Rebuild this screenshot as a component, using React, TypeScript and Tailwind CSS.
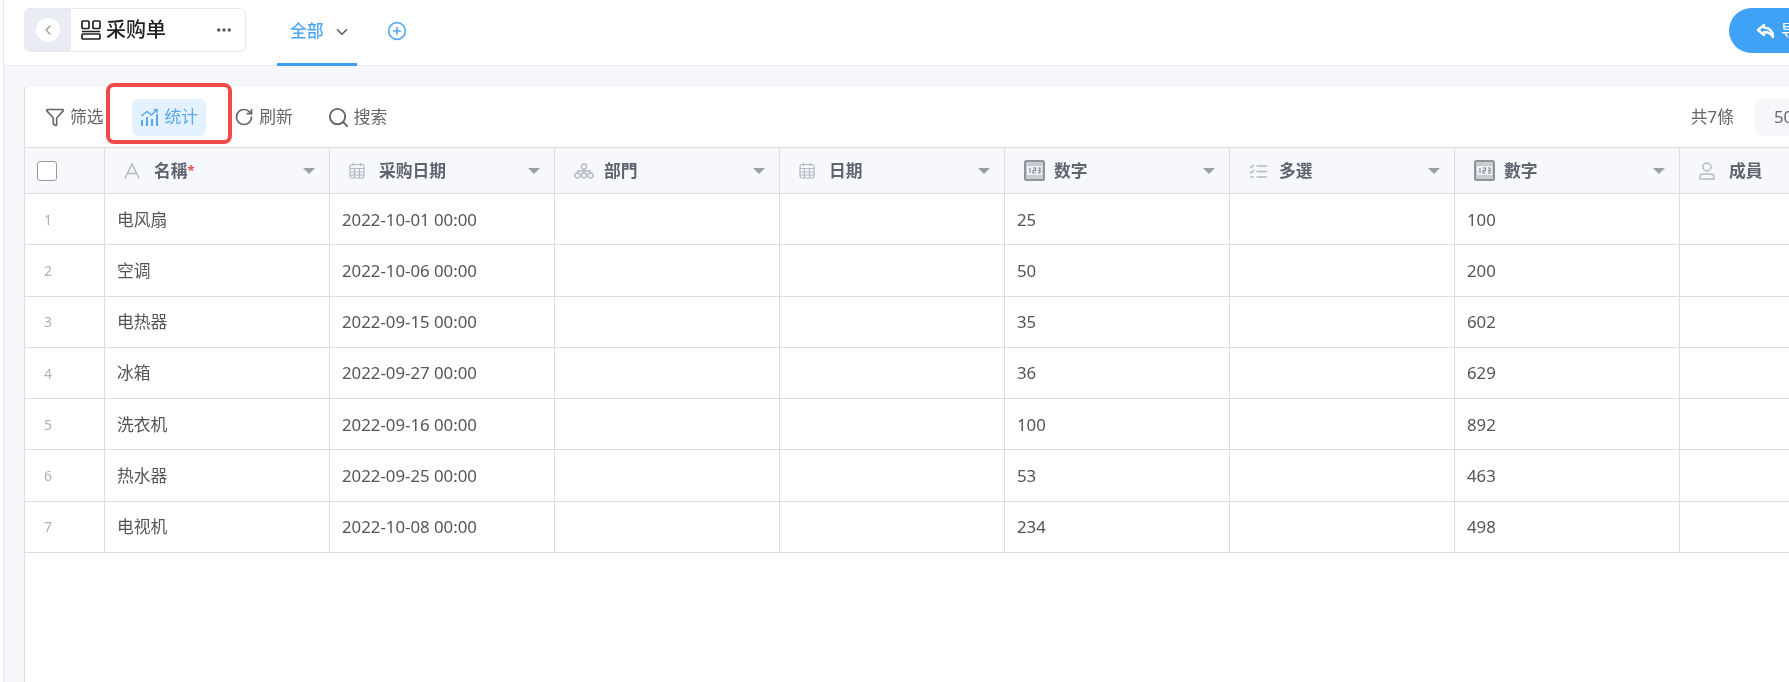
import React from 'react';
import { ChevronDown, ChevronLeft, CirclePlus, Ellipsis, Funnel, RotateCw, Search } from 'lucide-react';

const TitleIcon = () => (
  <svg width="20" height="20" viewBox="0 0 20 20" fill="none" stroke="#222" strokeWidth="1.700" className="shrink-0">
    <rect x="1" y="1" width="7" height="7.500" rx="1" />
    <rect x="12" y="1" width="7" height="7.500" rx="1" />
    <path d="M1 11.500h18" />
    <rect x="1" y="14" width="18" height="5" rx="1" />
  </svg>
);

const ReplyIcon = () => (
  <svg width="19" height="16" viewBox="0 0 19 16" fill="none" stroke="#fff" strokeWidth="2.400" strokeLinejoin="round" className="shrink-0">
    <path d="M8 2 2 7l6 5V9c4 0 7 1 9 5 0-6-3-9-9-9.500z" />
  </svg>
);

const StatsIcon = () => (
  <svg width="19" height="19" viewBox="0 0 19 19" fill="none" stroke="#5aa9f0" strokeWidth="2">
    <path d="M2 18v-6M7 18V9M12 18v-7M17 18V6" />
    <path d="M1.500 8 7 3.500l4.500 3.500 5-5" strokeWidth="1.500" />
    <path d="M13.500 1.500h3.500v3.500" strokeWidth="1.500" />
  </svg>
);

const TextTypeIcon = () => (
  <svg width="16" height="16" viewBox="0 0 16 16" fill="none" stroke="#b4b8c0" strokeWidth="1.500">
    <path d="M1 15.500 8 1l7 14.500M3.500 10.500h9" />
  </svg>
);

const DateTypeIcon = () => (
  <svg width="16" height="17" viewBox="0 0 16 17" fill="none" stroke="#b4b8c0" strokeWidth="1.200">
    <rect x="1" y="2.500" width="14" height="13.500" rx="2" />
    <path d="M1 6.500h14M1 10h14M1 13h14M5.500 6.500V16M10.500 6.500V16M4.500 1v3M11.500 1v3" />
  </svg>
);

const DeptTypeIcon = () => (
  <svg width="20" height="16" viewBox="0 0 20 16" fill="none" stroke="#b4b8c0" strokeWidth="1.300">
    <circle cx="10" cy="3.500" r="2.500" />
    <circle cx="3.500" cy="12.500" r="2.500" />
    <circle cx="10" cy="12.500" r="2.500" />
    <circle cx="16.500" cy="12.500" r="2.500" />
    <path d="M10 6v4M3.500 10V8h13v2" />
  </svg>
);

const NumberTypeIcon = () => (
  <svg width="21" height="21" viewBox="0 0 21 21" fill="none">
    <rect x="1" y="1" width="19" height="19" rx="1.500" fill="#c8cbd2" stroke="#8f919b" strokeWidth="2" />
    <rect x="3" y="6" width="15" height="9" fill="#eef0f4" />
    <path d="M6 8v5M9 8h2.500v2.500H9V13h2.500M14 8h2v5h-2M14 10.500h2" stroke="#7f828c" strokeWidth="1.100" />
  </svg>
);

const MultiTypeIcon = () => (
  <svg width="18" height="16" viewBox="0 0 18 16" fill="none" stroke="#b4b8c0" strokeWidth="1.400">
    <path d="M1 3 2.500 4.500 5 1.500M1 8.500 2.500 10 5 7M1 14h3.500M7.500 3H18M7.500 8.500H18M7.500 14H18" />
  </svg>
);

const MemberTypeIcon = () => (
  <svg width="16" height="18" viewBox="0 0 16 18" fill="none" stroke="#b4b8c0" strokeWidth="1.400">
    <circle cx="8" cy="5" r="4" />
    <path d="M1 17v-2a3 3 0 0 1 3-3h8a3 3 0 0 1 3 3v2z" />
  </svg>
);

const columns = [
  { label: '名稱', icon: <TextTypeIcon />, required: true },
  { label: '采购日期', icon: <DateTypeIcon /> },
  { label: '部門', icon: <DeptTypeIcon /> },
  { label: '日期', icon: <DateTypeIcon /> },
  { label: '数字', icon: <NumberTypeIcon /> },
  { label: '多選', icon: <MultiTypeIcon /> },
  { label: '數字', icon: <NumberTypeIcon /> },
  { label: '成員', icon: <MemberTypeIcon /> },
];

const rows = [
  ['电风扇', '2022-10-01 00:00', '25', '100'],
  ['空调', '2022-10-06 00:00', '50', '200'],
  ['电热器', '2022-09-15 00:00', '35', '602'],
  ['冰箱', '2022-09-27 00:00', '36', '629'],
  ['洗衣机', '2022-09-16 00:00', '100', '892'],
  ['热水器', '2022-09-25 00:00', '53', '463'],
  ['电视机', '2022-10-08 00:00', '234', '498'],
];

const Cell = ({ children }: { children?: React.ReactNode }) => (
  <div className="flex h-[51.3px] items-center border-r border-b border-[#dcdde1] pl-3 text-[#555]">{children}</div>
);

const App = () => {
  return (
    <div className="flex h-[682px] w-[1789px] overflow-hidden bg-white font-['Noto_Sans','Noto_Sans_CJK_SC',sans-serif] text-[16.8px] blur-[0.4px]">
      <div className="w-1 shrink-0 border-r border-[#e6e8ec]" />
      <div className="flex min-w-0 flex-1 flex-col">
        {/* top bar */}
        <div className="flex h-[66px] shrink-0 border-b border-[#eceef2] pl-5">
          <div className="mt-2 flex h-[44px] w-[222px] overflow-hidden rounded-md border border-[#e6e8ec]">
            <div className="flex w-[46px] items-center justify-center bg-[#e9edf3]">
              <div className="flex h-6 w-6 items-center justify-center rounded-full bg-white">
                <ChevronLeft size={16} color="#999" />
              </div>
            </div>
            <div className="flex flex-1 items-center pl-[10px] pr-3">
              <TitleIcon />
              <span className="ml-[5px] text-[20px] font-medium leading-none text-[#222]">采购单</span>
              <Ellipsis size={18} color="#555" strokeWidth={2.600} className="ml-auto" />
            </div>
          </div>
          <div className="ml-[31px] flex h-[66px] w-20 items-center border-b-[3px] border-[#3b9ff5] pl-[13px]">
            <span className="font-medium leading-none text-[#4aa5f5]">全部</span>
            <ChevronDown size={18} color="#555" className="ml-[9px]" />
          </div>
          <div className="ml-[30px] flex items-center pb-[3px]">
            <CirclePlus size={20} color="#5aa9f0" />
          </div>
          <div className="mt-2 ml-auto flex h-[45px] w-[60px] items-center overflow-hidden whitespace-nowrap rounded-l-full bg-[#40a2f6] pl-[27px] text-white">
            <ReplyIcon />
            <span className="ml-[6px] shrink-0">导出</span>
          </div>
        </div>

        {/* content */}
        <div className="flex min-h-0 flex-1 bg-[#f5f7fa] pl-5 pt-[21px]">
          <div className="flex min-w-0 flex-1 flex-col border-l border-[#dcdde1] bg-white">
            <div className="relative flex h-[60px] shrink-0 items-center pl-[20px] text-[#666]">
              <Funnel size={20} color="#666" />
              <span className="ml-[5px]">筛选</span>
              <div className="ml-[28px] flex h-[37px] items-center rounded-md bg-[#e3f2fe] px-2 text-[#5aa9f0]">
                <StatsIcon />
                <span className="ml-[6px]">统计</span>
              </div>
              <RotateCw size={20} color="#666" className="ml-[28px]" />
              <span className="ml-[5px]">刷新</span>
              <Search size={23} color="#666" className="ml-[34px]" />
              <span className="ml-[4px]">搜索</span>
              <span className="ml-auto">共7條</span>
              <div className="ml-[21px] flex h-[37px] w-[34px] items-center overflow-hidden rounded-l-md bg-[#f5f7fa] pl-[19px] text-[#666]">
                50
              </div>
              <div className="absolute -top-1 left-[81px] h-[61px] w-[126px] rounded-lg border-4 border-[#f04a4a]" />
            </div>

            <div className="grid w-max grid-cols-[80px_repeat(8,225px)]">
              <div className="flex h-[47px] items-center border-y border-r border-[#dcdde1] bg-[#f6f8fc] pl-3">
                <div className="h-5 w-5 rounded-[3px] border-[1.5px] border-[#999] bg-white" />
              </div>
              {columns.map((col) => (
                <div
                  key={col.label}
                  className="flex h-[47px] items-center border-y border-r border-[#dcdde1] bg-[#f6f8fc] pl-[19px] pr-[14px]"
                >
                  <div className="flex w-[21px] shrink-0 items-center">{col.icon}</div>
                  <span className="ml-[9px] font-bold text-[#60646f]">{col.label}</span>
                  {col.required && <span className="text-[13px] font-bold text-[#f04a4a]">*</span>}
                  <div className="ml-auto h-0 w-0 border-x-[6.5px] border-t-[6px] border-x-transparent border-t-[#9a9ea8]" />
                </div>
              ))}
              {rows.map((row, i) => (
                <React.Fragment key={i}>
                  <div className="flex h-[51.3px] items-center border-r border-b border-[#dcdde1] pl-[19px] text-[14px] text-[#aab0bd]">
                    {i + 1}
                  </div>
                  <Cell>{row[0]}</Cell>
                  <Cell>{row[1]}</Cell>
                  <Cell />
                  <Cell />
                  <Cell>{row[2]}</Cell>
                  <Cell />
                  <Cell>{row[3]}</Cell>
                  <Cell />
                </React.Fragment>
              ))}
            </div>
          </div>
        </div>
      </div>
    </div>
  );
};

export default App;
